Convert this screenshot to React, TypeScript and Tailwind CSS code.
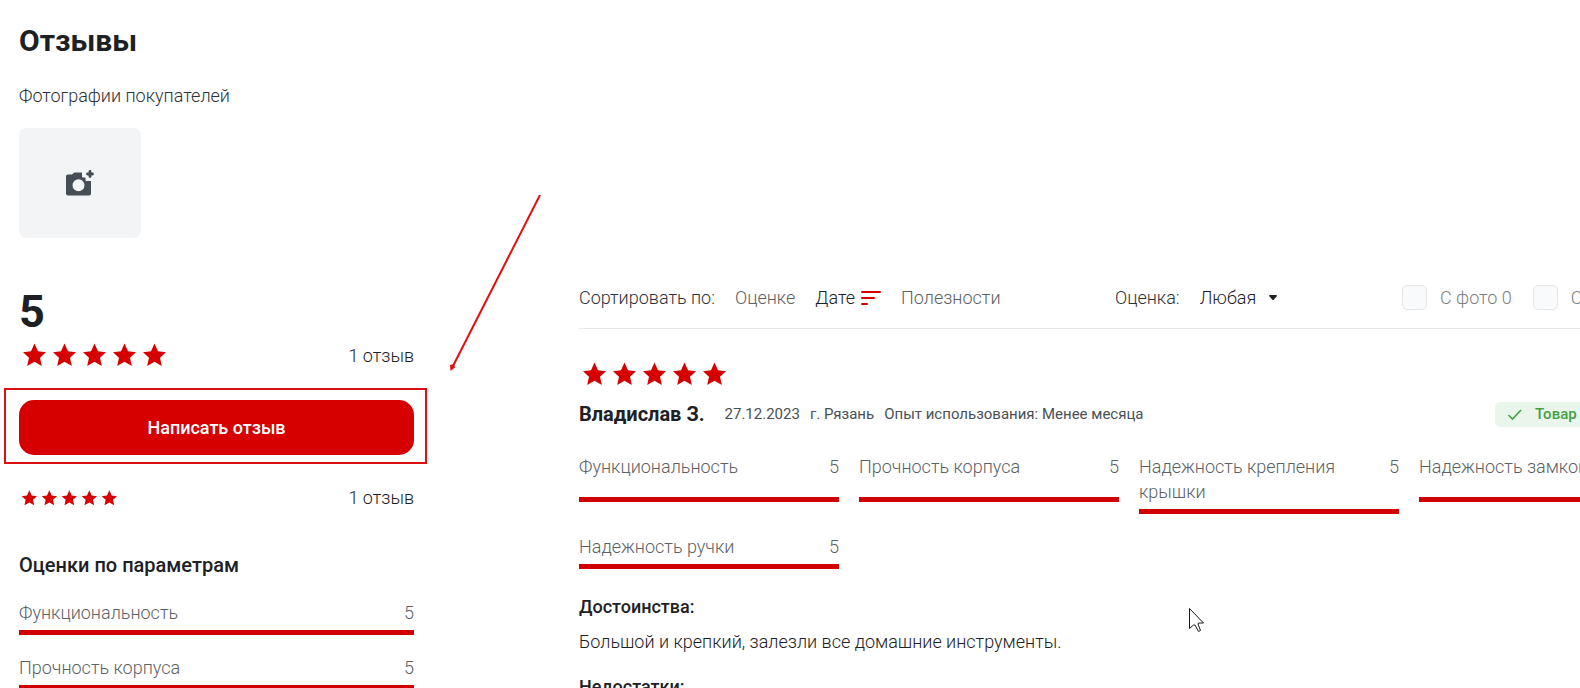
import React, { useState } from 'react';

const overallParams = [
  { label: 'Функциональность', value: 5 },
  { label: 'Прочность корпуса', value: 5 },
  { label: 'Надежность крепления крышки', value: 5 },
];

const reviewParams = [
  { label: 'Функциональность', value: 5 },
  { label: 'Прочность корпуса', value: 5 },
  { label: 'Надежность крепления крышки', value: 5 },
  { label: 'Надежность замков', value: 5 },
  { label: 'Надежность ручки', value: 5 },
];

function Stars({ small = false }: { small?: boolean }) {
  return (
    <div className="flex" role="img" aria-label="5 из 5">
      {[1, 2, 3, 4, 5].map((n) => (
        <svg
          key={n}
          viewBox="0 0 30 30"
          className={small ? 'size-5 fill-[#d60000]' : 'size-[30px] fill-[#d60000]'}
        >
          <path d="M15.5 3.500 19 11.300l8 .9-6 5.600 1.800 8.200-7.300-4.200-7.300 4.200 1.800-8.200-6-5.600 8-.9z" />
        </svg>
      ))}
    </div>
  );
}

function Param({ label, value }: { label: string; value: number }) {
  return (
    <div className="grid">
      <div className="flex justify-between gap-4 text-[#5c6164]">
        <span>{label}</span>
        <span>{value}</span>
      </div>
      <div className="pt-[5px]">
        <div className="h-[5px] bg-[#e5e7eb]">
          <div className="h-full bg-[#d10000]" style={{ width: `${(value / 5) * 100}%` }} />
        </div>
      </div>
    </div>
  );
}

function PhotoFilter({ id, label }: { id: string; label: string }) {
  return (
    <div className="flex items-center gap-[13px] text-[#7c8083]">
      <input
        id={id}
        type="checkbox"
        className="size-[25px] appearance-none rounded-[5px] border border-[#e3e5e7] bg-[#f9fafc] checked:bg-[#d60000]"
      />
      <label htmlFor={id} className="whitespace-nowrap">
        {label}
      </label>
    </div>
  );
}

export default function App() {
  const [rating, setRating] = useState('any');

  return (
    <main className="relative h-screen overflow-hidden bg-white px-[19px] pt-[21px] font-['Roboto',sans-serif] text-[18px] leading-[25px] font-light text-[#1d2125]">
      <h1 className="text-[30px] leading-10 font-bold">Отзывы</h1>
      <p className="mt-[22px] text-[#2c3238]">Фотографии покупателей</p>
      <button
        type="button"
        aria-label="Добавить фото"
        className="mt-5 flex h-[110px] w-[122px] items-center justify-center rounded-lg bg-[#f3f4f6]"
      >
        <svg viewBox="0 0 30 28" className="h-7 w-[30px]">
          <path
            fill="#474d54"
            fillRule="evenodd"
            d="M3 5.500h4l1.600-1.600q.4-.4 1-.4h7.400v4q0 1 1 1h2.500v2.500q0 1 1 1h4.500V24.500q0 2-2 2H3q-2 0-2-2v-17q0-2 2-2ZM13.500 10.200a6 6 0 1 0 0 12 6 6 0 0 0 0-12Z"
          />
          <path stroke="#474d54" strokeWidth="2.800" strokeLinecap="round" d="M25 2.500v5M22.500 5h5" />
        </svg>
      </button>

      <div className="mt-[46px] flex min-w-[1660px] gap-[165px]">
        <aside className="w-[395px] shrink-0">
          <div className="py-0.5 text-[45px] leading-[52px] font-bold">5</div>
          <div className="flex items-center justify-between">
            <Stars />
            <span>1 отзыв</span>
          </div>
          <div className="relative mt-[30px]">
            <button
              type="button"
              className="h-[55px] w-full rounded-[15px] bg-[#d60000] font-medium text-white"
            >
              Написать отзыв
            </button>
            <div className="pointer-events-none absolute -top-3 -right-[13px] -bottom-[9px] -left-[15px] border-2 border-[#db1111]" />
          </div>
          <div className="mt-[30px] flex items-center justify-between">
            <Stars small />
            <span>1 отзыв</span>
          </div>
          <h2 className="mt-[43px] text-[20px] font-medium">Оценки по параметрам</h2>
          <div className="mt-[22px] grid gap-5">
            {overallParams.map((p) => (
              <Param key={p.label} label={p.label} value={p.value} />
            ))}
          </div>
        </aside>

        <section className="min-w-[1100px] flex-1">
          {/* Сортировка и фильтры */}
          <div className="flex h-[45px] items-start border-b border-[#e6e7e8] pt-px">
            <div className="flex w-[536px] shrink-0 items-center gap-5">
              <span className="text-[#2c3238]">Сортировать по:</span>
              <button type="button" className="text-[#5c6164]">Оценке</button>
              <button type="button" className="flex items-center gap-1.5">
                Дате
                <svg viewBox="0 0 20 14" className="h-3.5 w-5" fill="none" stroke="#d60000" strokeWidth="2" strokeLinecap="round">
                  <path d="M1 1h18M1 7h12M1 13h5" />
                </svg>
              </button>
              <button type="button" className="text-[#5c6164]">Полезности</button>
            </div>
            <div className="flex w-[287px] shrink-0 items-center gap-5">
              <label htmlFor="rating" className="text-[#2c3238]">Оценка:</label>
              <div className="relative">
                <select
                  id="rating"
                  value={rating}
                  onChange={(e) => setRating(e.target.value)}
                  className="w-20 appearance-none bg-transparent"
                >
                  <option value="any">Любая</option>
                  <option value="5">5</option>
                </select>
                <svg viewBox="0 0 8 6" className="pointer-events-none absolute top-2.5 right-[3px] h-1.5 w-2 fill-[#1d2125]">
                  <path d="M1 0h6q1 0 1 1L4.700 4.700q-.7.6-1.400 0L0 1q0-1 1-1Z" />
                </svg>
              </div>
            </div>
            <div className="flex gap-[21px]">
              <PhotoFilter id="with-photo" label="С фото 0" />
              <PhotoFilter id="with-video" label="С видео 0" />
            </div>
          </div>

          {/* Отзыв */}
          <article className="pt-[30px]">
            <Stars />
            <div className="mt-[13px] flex items-center">
              <h3 className="text-[20px] font-bold">Владислав З.</h3>
              <div className="ml-5 flex gap-2.5 text-[15px] font-normal text-[#4a5056]">
                <span>27.12.2023</span>
                <span>г. Рязань</span>
                <span>Опыт использования: Менее месяца</span>
              </div>
              <div className="ml-auto flex w-[184px] items-center gap-3 rounded-[5px] bg-[#eaf6eb] pl-3 text-[15px] font-medium text-[#43a047]">
                <svg viewBox="0 0 16 14" className="h-3.5 w-4" fill="none" stroke="#43a047" strokeWidth="1.600">
                  <path d="m1.500 7 4 4L14 2" />
                </svg>
                Товар
              </div>
            </div>
            <div className="mt-[27px] grid grid-cols-4 gap-5">
              {reviewParams.map((p) => (
                <Param key={p.label} label={p.label} value={p.value} />
              ))}
            </div>
            <h4 className="mt-[25px] font-medium">Достоинства:</h4>
            <p className="mt-2.5">Большой и крепкий, залезли все домашние инструменты.</p>
            <h4 className="mt-5 font-medium">Недостатки:</h4>
          </article>
        </section>
      </div>

      {/* Стрелка к кнопке */}
      <svg viewBox="0 0 92 178" className="pointer-events-none absolute top-[195px] left-[449px] h-[178px] w-[92px]">
        <path d="M91 0 4 171" stroke="#e01010" strokeWidth="2" />
        <path d="m1 170 .5 6 4.500-3.500-1-3.500z" fill="#e01010" />
      </svg>

      {/* Курсор */}
      <svg viewBox="0 0 16 25" className="pointer-events-none absolute top-[608px] left-[1189px] h-[25px] w-4">
        <path
          d="M.5.5v20l4-3.500 1.500 0 3.500 6.500 2-1-2.500-6.500 .5-1h5z"
          fill="white"
          stroke="#15181c"
        />
      </svg>
    </main>
  );
}
